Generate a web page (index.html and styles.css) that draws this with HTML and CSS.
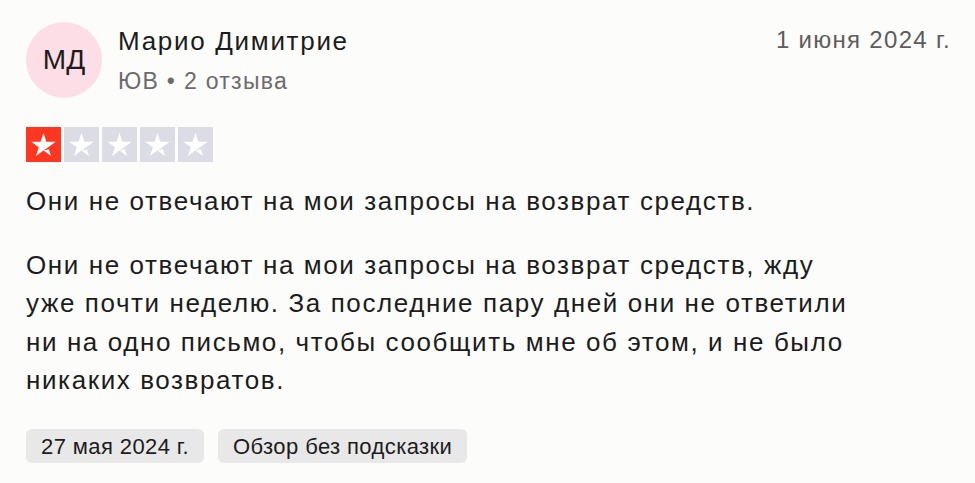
FILE: index.html
```html
<!DOCTYPE html>
<html lang="ru">
<head>
    <meta charset="UTF-8">
    <title>Отзыв</title>
    <link rel="stylesheet" href="styles.css">
</head>
<body>
    <div class="review">
        <div class="review-header">
            <div class="avatar">МД</div>
            <div class="author">
                <div class="author-name">Марио Димитрие</div>
                <div class="author-meta">ЮВ • 2 отзыва</div>
            </div>
            <div class="review-date">1 июня 2024 г.</div>
        </div>

        <!-- Rating: 1 of 5 -->
        <div class="stars">
            <svg class="star filled" viewBox="0 0 16 16"><path d="M8 10.78l2.43-.62 1.02 3.13L8 10.78zm5.6-4.04H9.32L8 2.7 6.68 6.74H2.4l3.46 2.5-1.32 4.04 3.46-2.5 2.14-1.54 3.46-2.5z"/></svg>
            <svg class="star" viewBox="0 0 16 16"><path d="M8 10.78l2.43-.62 1.02 3.13L8 10.78zm5.6-4.04H9.32L8 2.7 6.68 6.74H2.4l3.46 2.5-1.32 4.04 3.46-2.5 2.14-1.54 3.46-2.5z"/></svg>
            <svg class="star" viewBox="0 0 16 16"><path d="M8 10.78l2.43-.62 1.02 3.13L8 10.78zm5.6-4.04H9.32L8 2.7 6.68 6.74H2.4l3.46 2.5-1.32 4.04 3.46-2.5 2.14-1.54 3.46-2.5z"/></svg>
            <svg class="star" viewBox="0 0 16 16"><path d="M8 10.78l2.43-.62 1.02 3.13L8 10.78zm5.6-4.04H9.32L8 2.7 6.68 6.74H2.4l3.46 2.5-1.32 4.04 3.46-2.5 2.14-1.54 3.46-2.5z"/></svg>
            <svg class="star" viewBox="0 0 16 16"><path d="M8 10.78l2.43-.62 1.02 3.13L8 10.78zm5.6-4.04H9.32L8 2.7 6.68 6.74H2.4l3.46 2.5-1.32 4.04 3.46-2.5 2.14-1.54 3.46-2.5z"/></svg>
        </div>

        <h2 class="review-title">Они не отвечают на мои запросы на возврат средств.</h2>
        <p class="review-text">Они не отвечают на мои запросы на возврат средств, жду уже почти неделю. За последние пару дней они не ответили ни на одно письмо, чтобы сообщить мне об этом, и не было никаких возвратов.</p>

        <div class="tags">
            <span class="tag">27 мая 2024 г.</span>
            <span class="tag">Обзор без подсказки</span>
        </div>
    </div>
</body>
</html>
```

FILE: styles.css
```css
body {
    font-family: "Liberation Sans", Arial, sans-serif;
    background-color: #fcfcfb;
    color: #1c1c1c;
    margin: 0;
    padding: 0;
}
.review {
    padding: 22px 24px 0 26px;
}
.review-header {
    display: flex;
    align-items: flex-start;
}
.avatar {
    width: 76px;
    height: 76px;
    border-radius: 50%;
    background-color: #fddde6;
    display: flex;
    align-items: center;
    justify-content: center;
    font-size: 28px;
    flex-shrink: 0;
}
.author {
    flex: 1;
    margin-left: 16px;
    padding-top: 3px;
}
.author-name {
    font-size: 26px;
    line-height: 32px;
    letter-spacing: 1.7px;
}
.author-meta {
    font-size: 23px;
    line-height: 30px;
    letter-spacing: 1.3px;
    color: #6b6b6b;
    margin-top: 9px;
}
.review-date {
    font-size: 24px;
    line-height: 32px;
    letter-spacing: 1.3px;
    color: #5c5c5c;
    padding-top: 2px;
}
.stars {
    display: flex;
    gap: 3px;
    margin-top: 29px;
}
.star {
    width: 35px;
    height: 35px;
    background-color: #dcdce6;
    fill: white;
}
.star.filled {
    background-color: #ff3722;
}
.review-title {
    font-size: 26px;
    font-weight: normal;
    line-height: 38px;
    letter-spacing: 1.6px;
    margin: 20px 0 0 0;
}
.review-text {
    font-size: 26px;
    line-height: 38.3px;
    letter-spacing: 1.6px;
    margin: 26px 0 0 0;
    max-width: 830px;
}
.tags {
    display: flex;
    gap: 14px;
    margin-top: 30px;
}
.tag {
    background-color: #e8e8e8;
    border-radius: 6px;
    padding: 2px 15px 0 15px;
    height: 32px;
    line-height: 32px;
    font-size: 22px;
    letter-spacing: 0.4px;
}
```
